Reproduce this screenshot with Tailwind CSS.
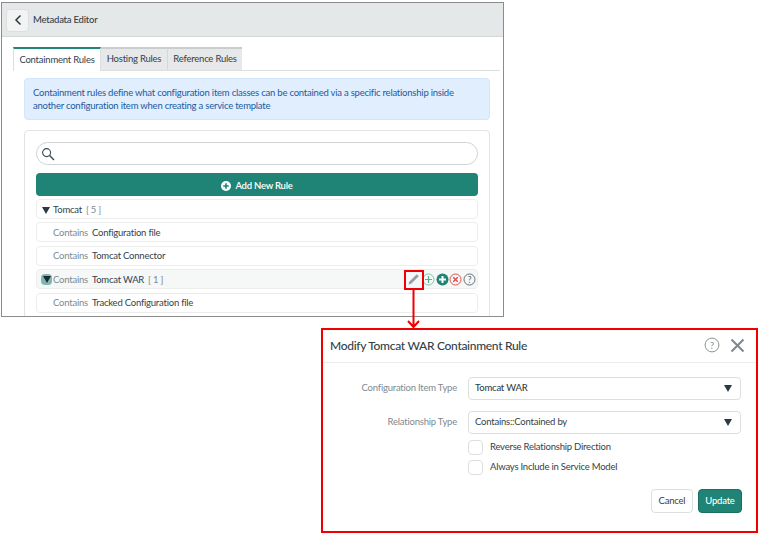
<!DOCTYPE html>
<html lang="en">
  <head>
    <meta charset="UTF-8">
    <title>Metadata Editor</title>
    <script src="https://cdn.jsdelivr.net/npm/@tailwindcss/browser@4"></script>
  </head>
  <body class="relative w-[759px] h-[533px] overflow-hidden bg-white font-['Lato','Noto_Sans',sans-serif] tracking-[-0.22px] text-[#33424a]">

    <!-- Metadata editor window -->
    <div class="ml-px mt-[2px] w-[503px] h-[315px] border border-[#8c8c8c] overflow-hidden">
      <div class="h-[34px] bg-[#e5e8e9] border-b border-[#d5d8d9] flex items-center pl-[4px] pt-px">
        <button class="w-[23px] h-[23px] bg-[#f2f3f3] border border-[#dcdfe0] rounded-sm flex items-center justify-center">
          <svg width="10" height="12" viewBox="0 0 10 12"><path d="M7.5 1.5 L3 6 L7.5 10.5" fill="none" stroke="#2b3a40" stroke-width="1.5"/></svg>
        </button>
        <span class="ml-[4px] text-[9.5px] font-medium">Metadata Editor</span>
      </div>

      <div class="pl-[11px] pr-[3px] pt-[10px]">
        <!-- Tabs -->
        <div class="flex h-[24px] border-b border-[#dcdfe0] text-[9.5px]">
          <div class="w-[88px] h-[24px] bg-white border-t-2 border-t-[#1f8476] border-x border-x-[#dcdfe0] flex items-center justify-center">Containment Rules</div>
          <div class="w-[67px] bg-[#e6e8e9] border-t-2 border-t-[#c9cdce] border-r border-r-[#d5d8d9] flex items-center justify-center">Hosting Rules</div>
          <div class="w-[74px] bg-[#e6e8e9] border-t-2 border-t-[#c9cdce] flex items-center justify-center">Reference Rules</div>
        </div>

        <!-- Info -->
        <div class="ml-[11px] mt-[7px] w-[466px] h-[42px] bg-[#e0eefd] border border-[#d3e5f9] rounded-sm px-2 flex items-center text-[9.5px] leading-[13px] text-[#1c5aa0]">
          <p>Containment rules define what configuration item classes can be contained via a specific relationship inside another configuration item when creating a service template</p>
        </div>

        <!-- Rules card -->
        <div class="ml-[11px] mt-[10px] w-[466px] h-[200px] border border-[#e1e3e4] rounded-sm px-[11px] pt-[11px]">
          <div class="h-[23px] border border-[#d0d3d4] rounded-full flex items-center pl-[4px]">
            <svg width="14" height="14" viewBox="0 0 14 14"><circle cx="5.6" cy="5.6" r="4" fill="none" stroke="#3b4a50" stroke-width="1.1"/><path d="M8.6 8.6 L13 13" stroke="#3b4a50" stroke-width="1.4"/></svg>
          </div>
          <div class="mt-2 h-[23px] bg-[#1f8476] rounded-sm flex items-center justify-center gap-1 pt-[3px] text-white text-[9.5px] font-semibold">
            <svg width="10" height="10" viewBox="0 0 10 10"><circle cx="5" cy="5" r="5" fill="#fff"/><path d="M5 2.2 V7.8 M2.2 5 H7.8" stroke="#1f8476" stroke-width="1.6"/></svg>
            Add New Rule
          </div>

          <div class="mt-[3px] flex flex-col gap-[3.4px] text-[9.5px]">
            <div class="h-[20px] pt-[2px] border border-[#eceeee] rounded-sm flex items-center pl-[5px]">
              <svg width="8" height="7" viewBox="0 0 8 7" class="mr-[3px]"><path d="M0 0 H8 L4 7 Z" fill="#2b3a40"/></svg><span>Tomcat</span><span class="ml-1 text-[#7d8a8f]">[ 5 ]</span>
            </div>
            <div class="h-[20px] pt-px border border-[#eceeee] rounded-sm flex items-center pl-[16px]">
              <span class="text-[#7d8a8f]">Contains</span><span class="ml-1">Configuration file</span>
            </div>
            <div class="h-[20px] pt-px border border-[#eceeee] rounded-sm flex items-center pl-[16px]">
              <span class="text-[#7d8a8f]">Contains</span><span class="ml-1">Tomcat Connector</span>
            </div>
            <div class="h-[20px] pt-px bg-[#f6f7f7] border border-[#eceeee] rounded-sm flex items-center pl-[4px]">
              <span class="w-[11px] h-[11px] bg-[#7fb8b0] rounded-sm flex items-center justify-center">
                <svg width="8" height="7" viewBox="0 0 8 7"><path d="M0 0 H8 L4 7 Z" fill="#1d2b30"/></svg>
              </span>
              <span class="ml-px text-[#7d8a8f]">Contains</span><span class="ml-1">Tomcat WAR</span><span class="ml-1 text-[#7d8a8f]">[ 1 ]</span>
              <div class="ml-auto mr-[1.5px] flex items-center gap-[0.5px]">
                <svg width="13" height="13" viewBox="0 0 13 13" class="mr-[1.5px]"><path d="M1.5 11.5 L2.2 8.8 L9.8 1.2 L11.8 3.2 L4.2 10.8 Z" fill="#979ea2"/></svg>
                <svg width="13" height="13" viewBox="0 0 13 13"><circle cx="6.5" cy="6.5" r="5.5" fill="none" stroke="#7cc4a8" stroke-width="1"/><path d="M6.5 3 V10 M3 6.5 H10" stroke="#58b08f" stroke-width="1.2"/></svg>
                <svg width="13" height="13" viewBox="0 0 13 13"><circle cx="6.5" cy="6.5" r="6" fill="#1f8476"/><path d="M6.5 3 V10 M3 6.5 H10" stroke="#fff" stroke-width="2"/></svg>
                <svg width="13" height="13" viewBox="0 0 13 13"><circle cx="6.5" cy="6.5" r="5.5" fill="none" stroke="#d9534f" stroke-width="1"/><path d="M4.2 4.2 L8.8 8.8 M8.8 4.2 L4.2 8.8" stroke="#d9534f" stroke-width="1.5"/></svg>
                <svg width="13" height="13" viewBox="0 0 13 13"><circle cx="6.5" cy="6.5" r="5.5" fill="none" stroke="#555f63" stroke-width="0.9"/><text x="6.5" y="9.5" text-anchor="middle" font-size="8.5" fill="#555f63">?</text></svg>
              </div>
            </div>
            <div class="h-[20px] pt-px border border-[#eceeee] rounded-sm flex items-center pl-[16px]">
              <span class="text-[#7d8a8f]">Contains</span><span class="ml-1">Tracked Configuration file</span>
            </div>
          </div>
        </div>
      </div>
    </div>

    <!-- Callout from pencil to dialog -->
    <div class="absolute left-[404px] top-[270px] w-[20px] h-[20px] border-2 border-[#f00000]"></div>
    <svg class="absolute left-[406px] top-[289px]" width="16" height="40" viewBox="0 0 16 40"><path d="M7.5 0 V38 M2 32 L7.5 38 L13 32" fill="none" stroke="#f00000" stroke-width="2"/></svg>

    <!-- Modify rule dialog -->
    <div class="ml-[321px] mt-[11px] w-[437px] h-[205px] border-2 border-[#f00000] bg-white">
      <div class="h-[33px] border-b border-[#eceeee] flex items-center pl-[7px] pr-[11px]">
        <span class="text-[12px] tracking-[-0.3px] font-medium">Modify Tomcat WAR Containment Rule</span>
        <svg class="ml-auto mb-[2px]" width="16" height="16" viewBox="0 0 16 16"><circle cx="8" cy="8" r="6.9" fill="none" stroke="#8a9296" stroke-width="1"/><text x="8" y="11.5" text-anchor="middle" font-size="10" fill="#8a9296">?</text></svg>
        <svg class="ml-[10px] mb-[2px]" width="15" height="15" viewBox="0 0 15 15"><path d="M1.5 1.5 L13.5 13.5 M13.5 1.5 L1.5 13.5" stroke="#7d878b" stroke-width="2"/></svg>
      </div>

      <div class="pt-[14px] pl-[5px] pr-[14px] text-[9.5px]">
        <div class="flex items-center h-[23px]">
          <label class="w-[134px] pr-[5px] text-right text-[#7d8a8f]">Configuration Item Type</label>
          <div class="ml-[6px] w-[273px] h-[23px] border border-[#dcdfe0] rounded-sm flex items-center justify-between pl-[6px] pr-[8px]">
            <span class="font-medium">Tomcat WAR</span><svg width="8" height="7" viewBox="0 0 8 7"><path d="M0 0 H8 L4 7 Z" fill="#2b3a40"/></svg>
          </div>
        </div>
        <div class="flex items-center h-[23px] mt-[11px]">
          <label class="w-[134px] pr-[5px] text-right text-[#7d8a8f]">Relationship Type</label>
          <div class="ml-[6px] w-[273px] h-[23px] border border-[#dcdfe0] rounded-sm flex items-center justify-between pl-[6px] pr-[8px]">
            <span>Contains::Contained by</span><svg width="8" height="7" viewBox="0 0 8 7"><path d="M0 0 H8 L4 7 Z" fill="#2b3a40"/></svg>
          </div>
        </div>
        <div class="flex items-center h-[15px] mt-[6px] ml-[140px]">
          <span class="w-[15px] h-[15px] border border-[#dcdfe0] rounded-sm"></span><span class="ml-[7px]">Reverse Relationship Direction</span>
        </div>
        <div class="flex items-center h-[15px] mt-[5px] ml-[140px]">
          <span class="w-[15px] h-[15px] border border-[#dcdfe0] rounded-sm"></span><span class="ml-[7px]">Always Include in Service Model</span>
        </div>
        <div class="flex justify-end gap-[5px] mt-[14px]">
          <button class="w-[42px] h-[24px] border border-[#dcdfe0] rounded-sm">Cancel</button>
          <button class="w-[44px] h-[24px] bg-[#1f8476] border border-[#1a6f63] rounded-sm text-white font-medium">Update</button>
        </div>
      </div>
    </div>
  </body>
</html>
